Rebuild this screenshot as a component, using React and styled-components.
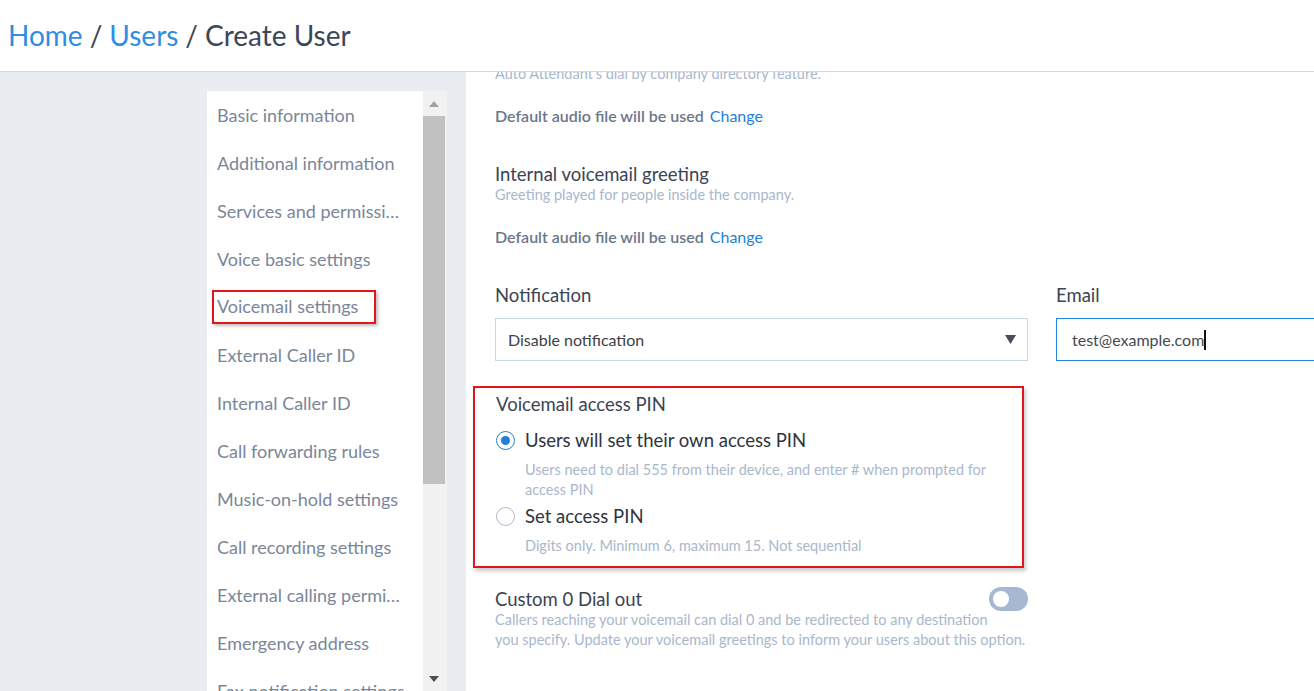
import React from "react";
import styled, { createGlobalStyle } from "styled-components";

const Global = createGlobalStyle`
  html, body { margin: 0; padding: 0; }
  body {
    font-family: Lato, "Open Sans", sans-serif;
    background: #ffffff;
    overflow: hidden;
  }
  * { box-sizing: border-box; }
`;

const navItems = [
  "Basic information",
  "Additional information",
  "Services and permissions",
  "Voice basic settings",
  "Voicemail settings",
  "External Caller ID",
  "Internal Caller ID",
  "Call forwarding rules",
  "Music-on-hold settings",
  "Call recording settings",
  "External calling permissions",
  "Emergency address",
  "Fax notification settings",
];

export default function App() {
  return (
    <>
      <Global />
      <Page>
        <Header>
          <Crumb href="#">Home</Crumb>
          <Sep>/</Sep>
          <Crumb href="#">Users</Crumb>
          <Sep>/</Sep>
          <Current>Create User</Current>
        </Header>
        <Body>
          <Aside>
            <Sidebar>
              <NavList>
                {navItems.map((item) => (
                  <NavItem key={item} $marked={item === "Voicemail settings"}>
                    <span>{item}</span>
                  </NavItem>
                ))}
              </NavList>
              <Scrollbar>
                <ScrollArrow>
                  <svg width="10" height="6" viewBox="0 0 10 6">
                    <path d="M0 6 L5 0 L10 6 Z" fill="#a3a3a3" />
                  </svg>
                </ScrollArrow>
                <Track>
                  <Thumb />
                </Track>
                <ScrollArrow>
                  <svg width="10" height="6" viewBox="0 0 10 6">
                    <path d="M0 0 L5 6 L10 0 Z" fill="#505050" />
                  </svg>
                </ScrollArrow>
              </Scrollbar>
            </Sidebar>
          </Aside>
          <Main>
            <Scroller>
              <Hint>Auto Attendant's dial by company directory feature.</Hint>
              <AudioLine>
                Default audio file will be used <Link href="#">Change</Link>
              </AudioLine>

              <Block>
                <Title>Internal voicemail greeting</Title>
                <Hint>Greeting played for people inside the company.</Hint>
                <AudioLine>
                  Default audio file will be used <Link href="#">Change</Link>
                </AudioLine>
              </Block>

              <FieldRow>
                <Field $width="533px">
                  <Title>Notification</Title>
                  <Select>
                    <span>Disable notification</span>
                    <svg width="11" height="9" viewBox="0 0 11 9">
                      <path d="M0 0 L11 0 L5.5 9 Z" fill="#4a4f57" />
                    </svg>
                  </Select>
                </Field>
                <Field $width="280px">
                  <Title>Email</Title>
                  <Input>
                    test@example.com<Caret />
                  </Input>
                </Field>
              </FieldRow>

              <PinBox>
                <Title>Voicemail access PIN</Title>
                <Radio $first>
                  <RadioDot $checked />
                  <RadioLabel>Users will set their own access PIN</RadioLabel>
                </Radio>
                <RadioHint>
                  Users need to dial 555 from their device, and enter # when prompted for access PIN
                </RadioHint>
                <Radio>
                  <RadioDot />
                  <RadioLabel>Set access PIN</RadioLabel>
                </Radio>
                <RadioHint>Digits only. Minimum 6, maximum 15. Not sequential</RadioHint>
              </PinBox>

              <ToggleBlock>
                <ToggleHead>
                  <Title>Custom 0 Dial out</Title>
                  <Toggle />
                </ToggleHead>
                <ToggleHint>
                  Callers reaching your voicemail can dial 0 and be redirected to any destination
                  <br />
                  you specify. Update your voicemail greetings to inform your users about this option.
                </ToggleHint>
              </ToggleBlock>
            </Scroller>
          </Main>
        </Body>
      </Page>
    </>
  );
}

const Page = styled.div`
  width: 1314px;
  height: 691px;
  display: flex;
  flex-direction: column;
  overflow: hidden;
`;

const Header = styled.div`
  height: 72px;
  flex: none;
  display: flex;
  align-items: center;
  gap: 7px;
  padding: 0 0 2px 8px;
  border-bottom: 1px solid #d3d9e2;
  font-size: 28px;
  background: #fff;
  position: relative;
  z-index: 2;
`;

const Crumb = styled.a`
  color: #2f8de4;
  text-decoration: none;
`;

const Sep = styled.span`
  color: #3b4656;
`;

const Current = styled.span`
  color: #3b4656;
`;

const Body = styled.div`
  flex: 1;
  display: flex;
  min-height: 0;
`;

const Aside = styled.div`
  width: 466px;
  flex: none;
  background: #e9edf1;
  padding: 19px 0 0 207px;
`;

const Sidebar = styled.div`
  display: flex;
  height: 100%;
  background: #fff;
  width: 240px;
`;

const NavList = styled.div`
  width: 216px;
  overflow: hidden;
`;

const NavItem = styled.div`
  height: 48px;
  display: flex;
  align-items: center;
  padding: 0 16px 0 10px;
  font-size: 18px;
  color: #7a8699;
  white-space: nowrap;
  span {
    display: block;
    overflow: hidden;
    text-overflow: ellipsis;
    ${(p) =>
      p.$marked &&
      `
      border: 2px solid #e3141b;
      margin-left: -5px;
      padding: 3px 16px 5px 3px;
      box-shadow: 2px 2px 3px rgba(0,0,0,0.25);
    `}
  }
`;

const Scrollbar = styled.div`
  width: 24px;
  background: #f1f1f1;
  display: flex;
  flex-direction: column;
`;

const ScrollArrow = styled.div`
  height: 25px;
  display: flex;
  align-items: center;
  justify-content: center;
  padding-right: 2px;
`;

const Track = styled.div`
  flex: 1;
  padding-right: 2px;
`;

const Thumb = styled.div`
  height: 368px;
  background: #c1c1c1;
`;

const Main = styled.div`
  flex: 1;
  background: #fff;
  overflow: hidden;
  position: relative;
`;

const Scroller = styled.div`
  margin-top: -8px;
  padding-left: 29px;
  display: flex;
  flex-direction: column;
`;

const Hint = styled.div`
  font-size: 14.5px;
  color: #a9b7cc;
  line-height: 20px;
`;

const AudioLine = styled.div`
  margin-top: 22px;
  font-size: 16px;
  color: #6a7789;
  font-weight: 600;
`;

const Link = styled.a`
  color: #1f7fdb;
  text-decoration: none;
  font-weight: 400;
  margin-left: 2px;
`;

const Block = styled.div`
  margin-top: 38px;
`;

const Title = styled.div`
  font-size: 18.5px;
  color: #3a4454;
  line-height: 22px;
`;

const FieldRow = styled.div`
  display: flex;
  gap: 28px;
  margin-top: 38px;
`;

const Field = styled.div`
  width: ${(p) => p.$width};
  flex: none;
  display: flex;
  flex-direction: column;
  gap: 12px;
`;

const Select = styled.div`
  height: 43px;
  border: 1px solid #c9d7e8;
  display: flex;
  align-items: center;
  justify-content: space-between;
  padding: 0 11px 0 12px;
  font-size: 16px;
  color: #3b3f45;
`;

const Input = styled.div`
  height: 43px;
  border: 1px solid #2384e4;
  border-right: none;
  display: flex;
  align-items: center;
  padding-left: 15px;
  font-size: 16px;
  color: #45494f;
`;

const Caret = styled.span`
  width: 2px;
  height: 20px;
  background: #111;
  display: inline-block;
`;

const PinBox = styled.div`
  width: 551px;
  margin: 25px 0 0 -22px;
  padding: 5px 20px 10px 21px;
  border: 2px solid #e3141b;
  box-shadow: 2px 3px 4px rgba(0, 0, 0, 0.22);
`;

const Radio = styled.div`
  display: flex;
  align-items: center;
  gap: 10px;
  margin-top: ${(p) => (p.$first ? "14px" : "5px")};
`;

const RadioDot = styled.span`
  width: 19px;
  height: 19px;
  border-radius: 50%;
  border: 1px solid ${(p) => (p.$checked ? "#1f7fdb" : "#a9b7cc")};
  background: #fff;
  position: relative;
  flex: none;
  &::after {
    content: "";
    display: ${(p) => (p.$checked ? "block" : "none")};
    position: absolute;
    inset: 4px;
    border-radius: 50%;
    background: #1f7fdb;
  }
`;

const RadioLabel = styled.span`
  font-size: 18.5px;
  color: #2e3440;
`;

const RadioHint = styled.div`
  font-size: 14.5px;
  color: #a9b7cc;
  line-height: 20px;
  margin: 9px 0 0 29px;
  max-width: 475px;
`;

const ToggleBlock = styled.div`
  width: 533px;
  margin-top: 20px;
  display: flex;
  flex-direction: column;
`;

const ToggleHead = styled.div`
  display: flex;
  align-items: center;
  justify-content: space-between;
  height: 22px;
`;

const ToggleHint = styled(Hint)`
  white-space: nowrap;
`;

const Toggle = styled.span`
  width: 39px;
  height: 24px;
  flex: none;
  border-radius: 12px;
  background: #a7b8d2;
  position: relative;
  &::after {
    content: "";
    position: absolute;
    left: 4px;
    top: 4px;
    width: 16px;
    height: 16px;
    border-radius: 50%;
    background: #fff;
  }
`;
